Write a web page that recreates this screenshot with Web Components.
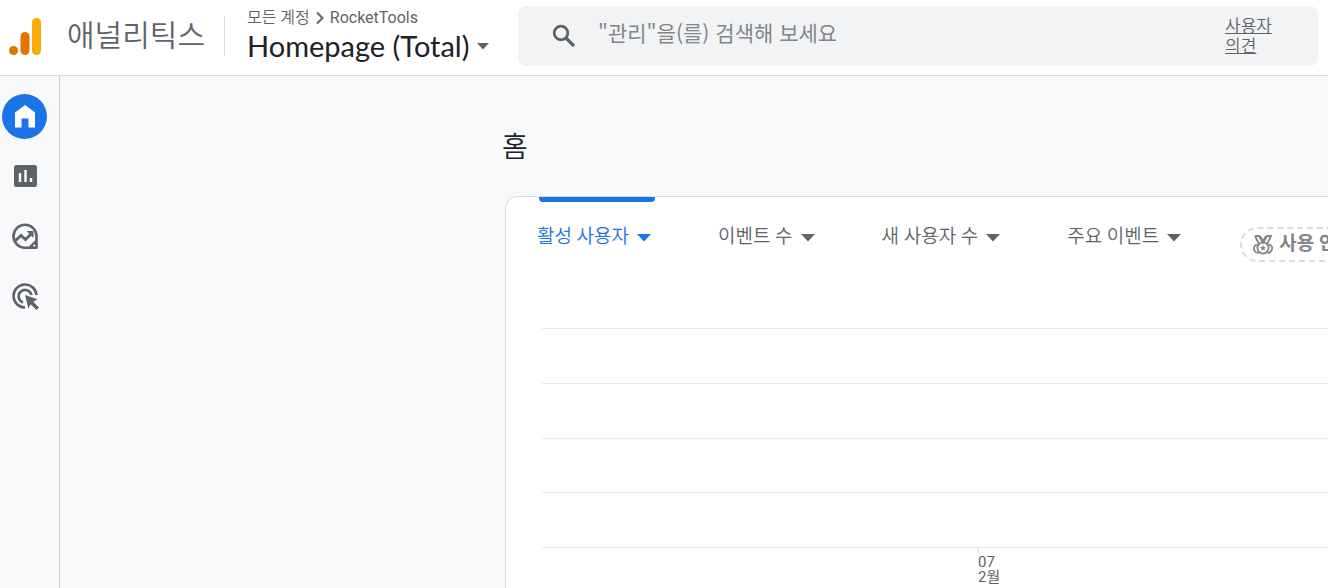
<!DOCTYPE html>
<html lang="ko">
<head>
<meta charset="utf-8">
<title>애널리틱스</title>
<style>
  body {
    margin: 0;
    font-family: Roboto, "Noto Sans CJK KR", sans-serif;
    font-weight: 350;
    color: #5f6368;
    background: #f8f9fb;
    overflow: hidden;
  }
</style>
</head>
<body>
<ga-app></ga-app>

<script>
/**
 * Small base class: every element renders its styles and markup once
 * into an open shadow root.
 */
class GaElement extends HTMLElement {
  constructor() {
    super();
    this.attachShadow({ mode: "open" });
  }

  connectedCallback() {
    this.shadowRoot.innerHTML =
      "<style>" + GaElement._base + this.constructor._styles + "</style>" + this._render();
  }

  static _base = `
* { box-sizing: border-box; }
button {
  font: inherit;
  color: inherit;
  background: none;
  border: 0;
  padding: 0;
  cursor: pointer;
}
a { color: inherit; text-decoration: none; }
svg { display: block; flex: none; }
`;
}

/* ga-caret - drop-down triangle in the current colour */
class GaCaret extends GaElement {
  _render() {
    return '<svg width="14" height="8" viewBox="0 0 14 8" aria-hidden="true"><path d="M0 0h14L7 7.5z" fill="currentColor"/></svg>';
  }
  static _styles = `
:host { display: block; flex: none; }
:host([small]) svg { width: 12px; height: 7px; }
`;
}

/* ga-header - product logo, property picker and search */
class GaHeader extends GaElement {
  _render() {
    return `
<a class="brand" href="#">
  <svg width="34" height="38" viewBox="0 0 34 38" aria-hidden="true">
    <rect x="24" y="1" width="9" height="37" rx="4.5" fill="#f9ab00"/>
    <rect x="12.500" y="15" width="9" height="23" rx="4.5" fill="#e37400"/>
    <circle cx="5.500" cy="33.500" r="4.5" fill="#e37400"/>
  </svg>
  <span>애널리틱스</span>
</a>
<div class="property">
  <nav class="crumbs">
    <a href="#">모든 계정</a>
    <svg width="10" height="14" viewBox="0 0 10 14" aria-hidden="true"><path d="M2 1.5L7.5 7L2 12.5" fill="none" stroke="#5f6368" stroke-width="2"/></svg>
    <a href="#" class="account">RocketTools</a>
  </nav>
  <button class="picker">Homepage (Total) <ga-caret small></ga-caret></button>
</div>
<ga-search></ga-search>`;
  }
  static _styles = `
:host {
  display: flex;
  align-items: flex-start;
  height: 76px;
  padding: 6px 10px 0 8px;
  background: #fff;
  border-bottom: 1px solid #dadce0;
}
.brand {
  display: flex;
  align-items: center;
  gap: 25px;
  height: 40px;
  margin-top: 10px;
  padding-right: 19px;
  border-right: 1px solid #dadce0;
  font-size: 30px;
  line-height: 40px;
  white-space: nowrap;
}
.property { width: 293px; padding-left: 22px; flex: none; }
.crumbs {
  display: flex;
  align-items: center;
  gap: 5px;
  font-size: 16px;
  line-height: 24px;
  white-space: nowrap;
}
.account { font-weight: 400; }
.picker {
  display: flex;
  align-items: center;
  gap: 8px;
  color: #202124;
  font: 400 29px/32px Lato, sans-serif;
  white-space: nowrap;
}
.picker ga-caret { color: #5f6368; }
ga-search { flex: 1; }
`;
}

/* ga-search - search box with the feedback link */
class GaSearch extends GaElement {
  _render() {
    return `
<svg width="24" height="24" viewBox="0 0 24 24" aria-hidden="true">
  <circle cx="9" cy="9" r="6.8" fill="none" stroke="#5f6368" stroke-width="2.8"/>
  <path d="M14 14l8 8" stroke="#5f6368" stroke-width="3.2"/>
</svg>
<input type="search" aria-label="검색" placeholder='"관리"을(를) 검색해 보세요'>
<a href="#">사용자<br>의견</a>`;
  }
  static _styles = `
:host {
  display: flex;
  align-items: center;
  height: 60px;
  padding: 0 46px 0 34px;
  background: #f1f3f4;
  border-radius: 8px;
}
input {
  flex: 1;
  min-width: 0;
  margin-left: 22px;
  padding: 0 0 8px;
  border: 0;
  outline: 0;
  background: none;
  font-family: "Noto Sans CJK KR", sans-serif;
  font-size: 21px;
  font-weight: 400;
  line-height: 32px;
  color: #5f6368;
}
input::placeholder { color: #80868b; opacity: 1; }
a {
  font-size: 17px;
  line-height: 20px;
  text-decoration: underline;
}
`;
}

/* ga-rail - icon navigation on the left */
class GaRail extends GaElement {
  _render() {
    return `
<a href="#" class="active" aria-label="홈">
  <svg width="45" height="45" viewBox="0 0 45 45"><path d="M13 33.500V18.500L23 11l10 7.500V33.500h-6.500v-9h-7v9z" fill="#fff"/></svg>
</a>
<a href="#" aria-label="보고서">
  <svg width="45" height="45" viewBox="0 0 45 45">
    <rect x="12" y="11" width="23" height="22" rx="2.5" fill="#5f6368"/>
    <path d="M18 19v9M23.500 16v12M29 24v4" stroke="#fff" stroke-width="2.4"/>
  </svg>
</a>
<a href="#" aria-label="탐색">
  <svg width="45" height="45" viewBox="0 0 45 45">
    <path d="M34.500 22.200V33.700H23A11.500 11.500 0 1 1 34.500 22.200z" fill="none" stroke="#5f6368" stroke-width="2.6" stroke-linejoin="round"/>
    <path d="M34.500 25v8.700H25.500z" fill="#5f6368"/>
    <circle cx="32.300" cy="31.500" r="1.1" fill="#fff"/>
    <path d="M13.500 26.500l5.500-5 4.500 4 6-6" fill="none" stroke="#5f6368" stroke-width="2.8"/>
    <path d="M24.500 17h7v7z" fill="#5f6368"/>
  </svg>
</a>
<a href="#" aria-label="광고">
  <svg width="45" height="45" viewBox="0 0 45 45">
    <path d="M23 33.500A11.500 11.500 0 1 1 34.500 21" fill="none" stroke="#5f6368" stroke-width="2.6"/>
    <path d="M21 28.500A6.500 6.500 0 1 1 29.500 21" fill="none" stroke="#5f6368" stroke-width="2.6"/>
    <path d="M23 21l12.500 4.200-4.300 2.600 5.800 5.700-2.500 2.500-5.800-5.800-2.300 4.300z" fill="#5f6368"/>
  </svg>
</a>`;
  }
  static _styles = `
:host {
  display: flex;
  flex-direction: column;
  gap: 15px;
  padding: 18px 0 0 2px;
  border-right: 1px solid #c9cccf;
}
a { width: 45px; height: 45px; border-radius: 50%; }
.active { background: #1a73e8; }
`;
}

/* ga-metric - one metric tab; the "active" attribute selects it */
class GaMetric extends GaElement {
  _render() {
    return '<button role="tab"><slot></slot><ga-caret></ga-caret></button>';
  }
  static _styles = `
:host { display: block; position: relative; flex: none; }
:host([active]) { color: #1a73e8; }
:host([active])::before {
  content: "";
  position: absolute;
  top: 0;
  left: 2px;
  right: -4px;
  height: 5px;
  background: #1a73e8;
  border-radius: 0 0 4px 4px;
}
button {
  display: flex;
  align-items: center;
  gap: 8px;
  padding-top: 26px;
  font-size: 19px;
  line-height: 28px;
  white-space: nowrap;
}
ga-caret { padding-top: 2px; }
`;
}

/* ga-badge - dashed pill with a medal */
class GaBadge extends GaElement {
  _render() {
    return `
<svg width="20" height="20" viewBox="0 0 20 20" fill="none" stroke="#80868b" stroke-width="1.8" aria-hidden="true">
  <path d="M2 1h4l4 7 4-7h4l-4 8M2 1l4 8M7 1l3 5 3-5"/>
  <circle cx="10" cy="13" r="5.6"/>
  <path d="M4.500 9.500C1 10 0 13 1.500 15.500S5 18 6 17.500M15.500 9.500C19 10 20 13 18.500 15.500S15 18 14 17.500"/>
  <path d="M10 10l.9 2 2.100.2-1.600 1.400.5 2.100-1.900-1.100-1.900 1.100.5-2.100L7 12.200l2.100-.2z" fill="#80868b" stroke="none"/>
</svg>
<span><slot></slot></span>`;
  }
  static _styles = `
:host {
  display: flex;
  align-items: center;
  gap: 6px;
  flex: none;
  height: 35px;
  padding: 0 11px;
  border: 2px dashed #dadce0;
  border-radius: 18px;
  color: #80868b;
  font-size: 19px;
  font-weight: 700;
  line-height: 28px;
  white-space: nowrap;
}
span { padding-bottom: 2px; }
`;
}

/* ga-chart - empty plot area: grid lines and one date tick */
class GaChart extends GaElement {
  _render() {
    return `
<div class="plot"><i></i><i></i><i></i><i></i></div>
<div class="axis"><span class="tick"></span><time datetime="02-07">07<br>2월</time></div>`;
  }
  static _styles = `
:host { display: block; padding: 66px 0 0 36px; }
.plot {
  display: grid;
  grid-template-rows: 55px 55px 54px 55px;
  border-bottom: 1px solid #e8eaed;
}
i { border-top: 1px solid #e8eaed; }
.axis {
  display: grid;
  justify-items: start;
  padding-left: 435px;
  font-size: 15px;
  font-weight: 400;
  line-height: 15px;
}
.tick { width: 2px; height: 6px; background: #e8eaed; }
time { padding: 1px 0 0 1px; }
`;
}

/* ga-app - page frame */
class GaApp extends GaElement {
  _render() {
    return `
<ga-header></ga-header>
<div class="body">
  <ga-rail></ga-rail>
  <main>
    <h1>홈</h1>
    <section>
      <div class="metrics" role="tablist">
        <ga-metric active>활성 사용자</ga-metric>
        <ga-metric>이벤트 수</ga-metric>
        <ga-metric>새 사용자 수</ga-metric>
        <ga-metric>주요 이벤트</ga-metric>
        <ga-badge>사용 안함</ga-badge>
      </div>
      <ga-chart></ga-chart>
    </section>
  </main>
</div>`;
  }
  static _styles = `
:host { display: flex; flex-direction: column; height: 100vh; }
ga-header { flex: none; }
.body {
  flex: 1;
  min-height: 0;
  display: grid;
  grid-template-columns: 60px minmax(0, 1fr);
}
main {
  display: flex;
  flex-direction: column;
  min-width: 0;
  padding: 52px 0 0 445px;
}
h1 {
  margin: 0 0 28px -3px;
  color: #202124;
  font-size: 28px;
  font-weight: 350;
  line-height: 40px;
}
section {
  flex: 1;
  overflow: hidden;
  background: #fff;
  border: 1px solid #dadce0;
  border-width: 1px 0 0 1px;
  border-radius: 12px 0 0 0;
}
.metrics {
  display: flex;
  gap: 67px;
  padding-left: 31px;
}
ga-badge { margin: 30px 0 0 -8px; }
`;
}

customElements.define("ga-caret", GaCaret);
customElements.define("ga-search", GaSearch);
customElements.define("ga-header", GaHeader);
customElements.define("ga-rail", GaRail);
customElements.define("ga-metric", GaMetric);
customElements.define("ga-badge", GaBadge);
customElements.define("ga-chart", GaChart);
customElements.define("ga-app", GaApp);
</script>
</body>
</html>
